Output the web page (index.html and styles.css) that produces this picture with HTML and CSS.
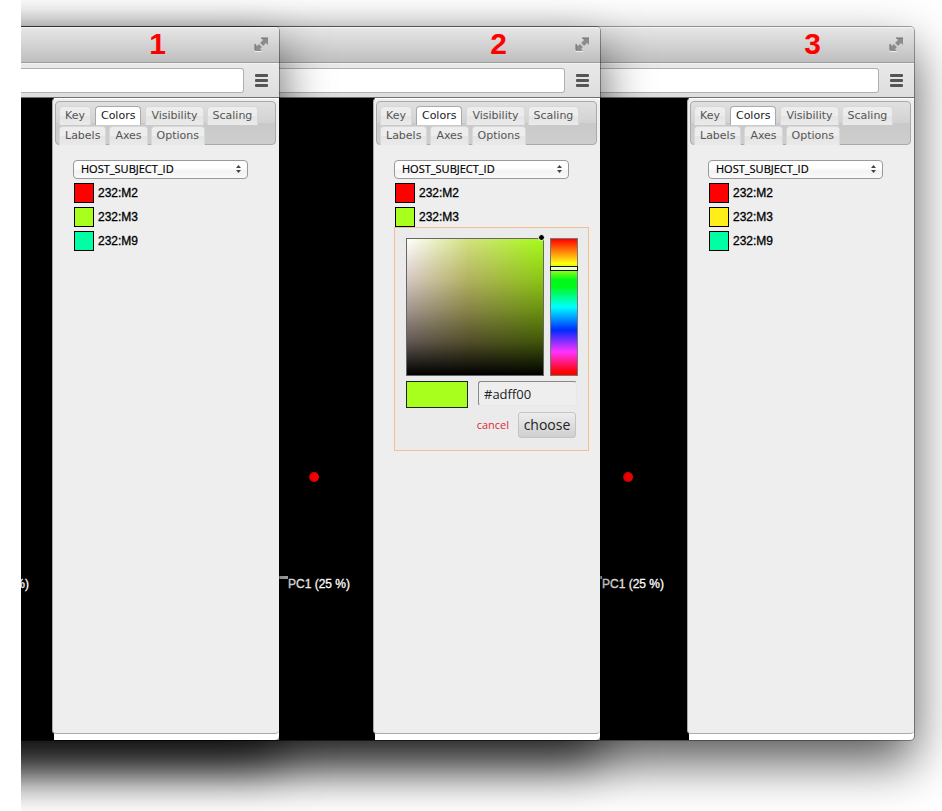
FILE: index.html
```html
<!DOCTYPE html>
<html lang="en">
<head>
<meta charset="utf-8">
<title>Color picker steps</title>
<link rel="stylesheet" href="styles.css">
</head>
<body>
<svg class="defs" aria-hidden="true">
  <symbol id="expand" viewBox="0 0 15 15">
    <path d="M7 1h7v7l-2-2-3 3-3-3 3-3z" fill="#8c8c8c"/>
    <path d="M1 7v7h7l-2-2 2-2-3-3-2 2z" fill="#8c8c8c"/>
    <path d="M7 1h7M1 7v6" stroke="#707070" fill="none"/>
    <path d="M1 14.500h7" stroke="#eee" fill="none"/>
    <path d="M5 6l4 4" stroke="#cfcfcf" stroke-width="1.500" fill="none"/>
  </symbol>
  <symbol id="updown" viewBox="0 0 5 8">
    <path d="M0 3l2.500-3L5 3zM0 5h5L2.500 8z" fill="#444"/>
  </symbol>
</svg>
<main class="stage">
  <section class="window first">
    <header class="titlebar"><span class="step">1</span><button class="icon" aria-label="Full screen"><svg width="15" height="15"><use href="#expand"/></svg></button></header>
    <div class="toolbar"><input class="address" type="text" aria-label="Address"><button class="menu" aria-label="Menu"><i></i><i></i><i></i></button></div>
    <div class="content">
      <div class="plot"><span class="axis"></span><span class="axis-label">PC1 (25 %)</span></div>
      <aside class="side"><div class="panel">
        <nav class="tabs"><button>Key</button><button class="active">Colors</button><button>Visibility</button><button>Scaling</button><button>Labels</button><button>Axes</button><button>Options</button></nav>
        <div class="colors">
          <div class="dropdown"><select aria-label="Category"><option>HOST_SUBJECT_ID</option></select><svg class="arrows" width="5" height="8"><use href="#updown"/></svg></div>
          <ul class="legend">
            <li><button class="swatch red" aria-label="Color of 232:M2"></button>232:M2</li>
            <li><button class="swatch lime" aria-label="Color of 232:M3"></button>232:M3</li>
            <li><button class="swatch mint" aria-label="Color of 232:M9"></button>232:M9</li>
          </ul>
        </div>
      </div></aside>
    </div>
  </section>

  <section class="window second">
    <header class="titlebar"><span class="step">2</span><button class="icon" aria-label="Full screen"><svg width="15" height="15"><use href="#expand"/></svg></button></header>
    <div class="toolbar"><input class="address" type="text" aria-label="Address"><button class="menu" aria-label="Menu"><i></i><i></i><i></i></button></div>
    <div class="content">
      <div class="plot"><span class="point"></span><span class="axis"></span><span class="axis-label">PC1 (25 %)</span></div>
      <aside class="side"><div class="panel">
        <nav class="tabs"><button>Key</button><button class="active">Colors</button><button>Visibility</button><button>Scaling</button><button>Labels</button><button>Axes</button><button>Options</button></nav>
        <div class="colors">
          <div class="dropdown"><select aria-label="Category"><option>HOST_SUBJECT_ID</option></select><svg class="arrows" width="5" height="8"><use href="#updown"/></svg></div>
          <ul class="legend">
            <li><button class="swatch red" aria-label="Color of 232:M2"></button>232:M2</li>
            <li><button class="swatch lime" aria-label="Color of 232:M3"></button>232:M3</li>
          </ul>
          <div class="picker">
            <div class="pick-row">
              <div class="shade"><span class="handle"></span></div>
              <div class="hue"><span class="slider"></span></div>
            </div>
            <div class="pick-row value-row">
              <div class="preview"></div>
              <input class="hex" type="text" value="#adff00" aria-label="Hex color">
            </div>
            <div class="actions"><a href="#">cancel</a><button class="choose">choose</button></div>
          </div>
        </div>
      </div></aside>
    </div>
  </section>

  <section class="window third">
    <header class="titlebar"><span class="step">3</span><button class="icon" aria-label="Full screen"><svg width="15" height="15"><use href="#expand"/></svg></button></header>
    <div class="toolbar"><input class="address" type="text" aria-label="Address"><button class="menu" aria-label="Menu"><i></i><i></i><i></i></button></div>
    <div class="content">
      <div class="plot"><span class="point"></span><span class="axis"></span><span class="axis-label">PC1 (25 %)</span></div>
      <aside class="side"><div class="panel">
        <nav class="tabs"><button>Key</button><button class="active">Colors</button><button>Visibility</button><button>Scaling</button><button>Labels</button><button>Axes</button><button>Options</button></nav>
        <div class="colors">
          <div class="dropdown"><select aria-label="Category"><option>HOST_SUBJECT_ID</option></select><svg class="arrows" width="5" height="8"><use href="#updown"/></svg></div>
          <ul class="legend">
            <li><button class="swatch red" aria-label="Color of 232:M2"></button>232:M2</li>
            <li><button class="swatch yellow" aria-label="Color of 232:M3"></button>232:M3</li>
            <li><button class="swatch mint" aria-label="Color of 232:M9"></button>232:M9</li>
          </ul>
        </div>
      </div></aside>
    </div>
  </section>
</main>
</body>
</html>
```
FILE: styles.css
```css
* { box-sizing: border-box; }
body { margin: 0; background: #fff; font-family: "Liberation Sans", Arial, sans-serif; }
button, input, select { font: inherit; margin: 0; padding: 0; }
.defs { display: none; }

.stage {
  display: grid;
  grid-template-columns: 258fr 321fr 314fr;
  min-height: 100vh;
  margin-left: 21px;
  padding: 27px 28px 71px 0;
  overflow: hidden;
}

/* Each window lies over the next one and continues behind the previous one. */
.window { position: relative; display: flex; flex-direction: column; min-width: 0; }
.first { z-index: 3; }
.second { z-index: 2; }
.third { z-index: 1; }
.window::before {
  content: "";
  position: absolute;
  inset: 0 0 0 -100vw;
  z-index: -1;
  border-radius: 4px;
  background: #fff;
  box-shadow: 0 0 0 1px rgba(0, 0, 0, .35), 0 22px 50px rgba(0, 0, 0, .66);
}

.titlebar {
  display: flex;
  align-items: center;
  justify-content: flex-end;
  gap: 68px;
  height: 36px;
  padding: 0 10px 2px 0;
  border-top: 1px solid #f4f4f4;
  border-bottom: 1px solid #9a9a9a;
  border-top-right-radius: 4px;
  background: linear-gradient(#e6e6e6, #bfbfbf);
}
.first .titlebar { gap: 88px; }
.step { color: #f00; font-size: 30px; font-weight: bold; line-height: 32px; }
.icon { display: flex; border: 0; background: none; }

.toolbar {
  display: flex;
  align-items: center;
  gap: 11px;
  height: 35px;
  padding-right: 11px;
  border-top: 1px solid #f4f4f4;
  border-bottom: 1px solid #6e6e6e;
  background: linear-gradient(#e9e9e9, #dedede);
}
.address {
  flex: 1;
  min-width: 0;
  height: 25px;
  border: 1px solid #b0b0b0;
  border-left: 0;
  border-radius: 0 3px 3px 0;
  background: #fff;
}
.menu { display: grid; gap: 2px; width: 13px; border: 0; background: none; }
.menu i { height: 3px; border-radius: 1px; background: #555; }

.content { flex: 1; display: flex; min-height: 0; border-radius: 0 0 4px 0; overflow: hidden; background: #000; }
.plot { position: relative; flex: 1; overflow: hidden; background: #000; }
.point {
  position: absolute;
  top: 58%;
  right: 54px;
  width: 10px;
  height: 10px;
  margin-top: 2px;
  border-radius: 50%;
  background: radial-gradient(circle at 60% 50%, #f00 50%, #900);
}
.axis { position: absolute; top: 74%; right: 85px; width: 50px; height: 3px; margin-top: 3px; background: #ccc; }
.axis-label { position: absolute; top: 74%; right: 23px; margin-top: 4px; color: #fff; font-size: 12px; line-height: 14px; white-space: nowrap; -webkit-text-stroke: 0.3px #fff; }

.side {
  display: flex;
  width: 227px;
  padding-bottom: 6px;
  background: linear-gradient(90deg, #000 2px, #fff 2px);
}
.panel { flex: 1; padding: 2px 3px 0 2px; border: 1px solid #aaa; border-top-color: #fff; border-right-width: 0; border-radius: 4px; background: #eee; }

.tabs {
  display: flex;
  flex-wrap: wrap;
  gap: 1px 3px;
  height: 44px;
  padding: 4px 3px 0;
  border: 1px solid #aaa;
  border-radius: 4px;
  background: linear-gradient(#e0e0e0, #d2d2d2 50%, #c9c9c9 50%, #cecece);
}
.tabs button {
  height: 19px;
  padding: 0 5px;
  border: 1px solid #d8d8d8;
  border-bottom: 0;
  border-radius: 4px 4px 0 0;
  background: linear-gradient(#ededed 50%, #e4e4e4 50%, #eaeaea);
  color: #555;
  font: 11px/18px "DejaVu Sans", Verdana, sans-serif;
}
.tabs .active { margin: 0 1px; border-color: #aaa; background: #fff; color: #212121; }

.colors { padding: 15px 0 0 18px; }
.dropdown { position: relative; width: 175px; }
.dropdown select {
  display: block;
  width: 100%;
  height: 19px;
  padding: 0 7px 2px;
  appearance: none;
  border: 1px solid #999;
  border-radius: 4px;
  background: linear-gradient(#fff 40%, #f2f2f2 60%, #fafafa);
  color: #000;
  font: 11px/15px "Open Sans", "Noto Sans", sans-serif;
  -webkit-text-stroke: 0.2px #000;
}
.arrows { position: absolute; top: 5px; right: 7px; pointer-events: none; }

.legend { display: grid; gap: 4px; margin: 0; padding: 4px 0 0 1px; list-style: none; font-size: 12px; -webkit-text-stroke: 0.3px #000; }
.legend li { display: flex; align-items: center; gap: 4px; height: 20px; }
.swatch { width: 20px; height: 20px; border: 1px solid #000; }
.red { background: #f00; }
.lime { background: #a8ff1d; }
.yellow { background: #ffee18; }
.mint { background: #00ffa5; }

.picker { width: 195px; height: 224px; padding: 10px 10px 0 11px; border: 1px solid #f5be8e; background: #ebebeb; }
.pick-row { display: flex; gap: 6px; }
.shade {
  position: relative;
  width: 138px;
  height: 138px;
  border: 1px solid #666;
  background: linear-gradient(#fff, #d6c8c2 30%, #a39590 52%, #645955 75%, #000), linear-gradient(90deg, #fff, #d4e280 45%, #a6fb18);
  background-blend-mode: multiply;
}
.handle { position: absolute; top: -5px; right: -2px; width: 7px; height: 7px; border: 1px solid #fff; border-radius: 50%; background: #000; }
.hue {
  position: relative;
  width: 28px;
  height: 138px;
  border: 1px solid #777;
  background: linear-gradient(#f00, #ff1 18%, #00f91a 30%, #00f91a 35%, #0ff 50%, #002bff 67%, #f3f 83%, #f00 98%);
}
.slider { position: absolute; top: 27px; left: -1px; right: -1px; height: 5px; border: 1px solid #111; background: #efffc8; }
.value-row { gap: 10px; padding-top: 5px; }
.preview { width: 62px; height: 27px; border: 1px solid #222; background: #a8ff1d; }
.hex {
  width: 99px;
  height: 25px;
  padding: 0 5px;
  border: 1px solid #e8e8e8;
  border-top-color: #888;
  border-left-color: #888;
  border-radius: 3px;
  background: #eee;
  color: #222;
  font: 13px/18px "Open Sans", "Noto Sans", sans-serif;
}
.actions { display: flex; align-items: center; justify-content: flex-end; gap: 9px; padding: 4px 2px 0 0; font: 11px/18px "Open Sans", "Noto Sans", sans-serif; }
.actions a { color: #db2b36; text-decoration: none; }
.choose {
  width: 58px;
  height: 26px;
  border: 1px solid #c4c4c4;
  border-radius: 3px;
  background: linear-gradient(#ededed, #cfcfcf);
  color: #222;
  font: 14px/20px "Open Sans", "Noto Sans", sans-serif;
}
```
